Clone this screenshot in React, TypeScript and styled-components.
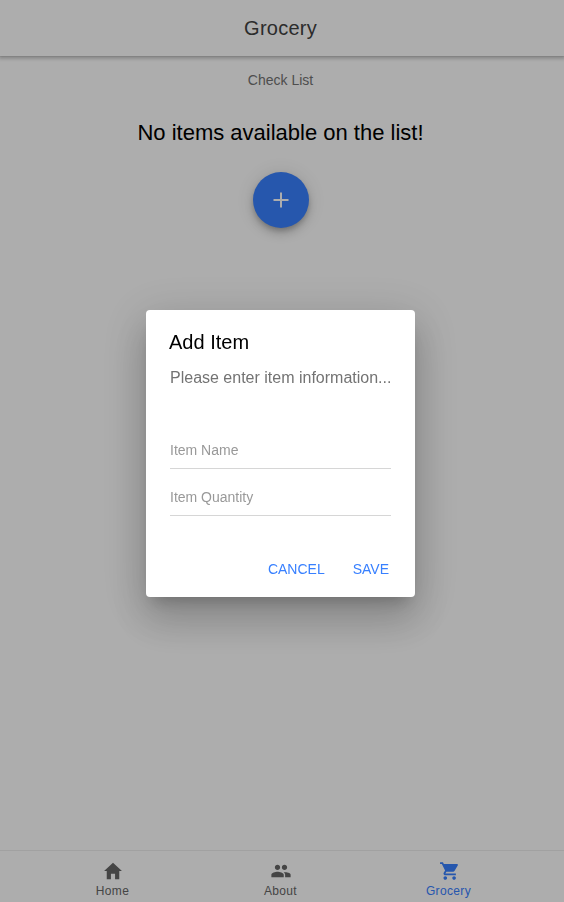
import React from "react";
import styled, { createGlobalStyle } from "styled-components";
import { IoMdAdd, IoMdCart, IoMdHome, IoMdPeople } from "react-icons/io";

const GlobalStyle = createGlobalStyle`
  * { box-sizing: border-box; }
  body {
    margin: 0;
    background: #fff;
    font-family: "Liberation Sans", Arial, sans-serif;
    overflow: hidden;
  }
  button, input { font-family: inherit; }
`;

const Page = styled.div`
  display: flex;
  flex-direction: column;
  height: 100vh;
`;

const Header = styled.header`
  display: flex;
  align-items: center;
  justify-content: center;
  flex: none;
  height: 56px;
  padding-right: 3px;
  background: #fff;
  box-shadow: 0 1px 0 rgba(0, 0, 0, 0.06), 0 2px 3px 1px rgba(0, 0, 0, 0.2);
`;

const Title = styled.h1`
  margin: 0;
  font-size: 20px;
  font-weight: 400;
  letter-spacing: 0.24px;
  color: #424242;
`;

const Content = styled.main`
  display: flex;
  flex: 1;
  flex-direction: column;
  align-items: center;
  padding: 16px 3px 0 0;
`;

const ListHeader = styled.div`
  font-size: 14px;
  line-height: 16px;
  color: #737373;
`;

const EmptyMessage = styled.h2`
  margin: 32px 0 27px;
  font-size: 22px;
  font-weight: 400;
  line-height: 25px;
  color: #000;
`;

const Fab = styled.button`
  display: flex;
  align-items: center;
  justify-content: center;
  width: 56px;
  height: 56px;
  margin-left: 1px;
  padding: 0;
  border: 0;
  border-radius: 50%;
  background: #3880ff;
  color: #fff;
  font-size: 24px;
  box-shadow: 0 3px 5px -1px rgba(0, 0, 0, 0.2), 0 6px 10px 0 rgba(0, 0, 0, 0.14),
    0 1px 18px 0 rgba(0, 0, 0, 0.12);
`;

const TabBar = styled.nav`
  display: flex;
  justify-content: center;
  flex: none;
  height: 52px;
  padding-right: 3px;
  border-top: 1px solid rgba(0, 0, 0, 0.07);
`;

const Tab = styled.button<{ $active?: boolean }>`
  display: flex;
  flex-direction: column;
  align-items: center;
  width: 168px;
  padding: 9px 0 0;
  border: 0;
  background: none;
  color: ${({ $active }) => ($active ? "#3880ff" : "#666")};
  font-size: 22px;
`;

const TabLabel = styled.span`
  margin-top: 2px;
  font-size: 12px;
  line-height: 14px;
  letter-spacing: 0.36px;
`;

const Backdrop = styled.div`
  position: fixed;
  inset: 0;
  display: flex;
  align-items: center;
  justify-content: center;
  padding: 5px 3px 0 0;
  background: rgba(0, 0, 0, 0.32);
`;

const Dialog = styled.section`
  display: flex;
  flex-direction: column;
  width: 269px;
  height: 287px;
  border-radius: 4px;
  background: #fff;
  box-shadow: 0 11px 15px -7px rgba(0, 0, 0, 0.2), 0 24px 38px 3px rgba(0, 0, 0, 0.14),
    0 9px 46px 8px rgba(0, 0, 0, 0.12);
`;

const DialogTitle = styled.h2`
  margin: 0;
  padding: 21px 23px 0;
  font-size: 20px;
  font-weight: 400;
  line-height: 23px;
  color: #000;
`;

const DialogMessage = styled.p`
  margin: 0;
  padding: 15px 0 0 24px;
  font-size: 16px;
  line-height: 18px;
  white-space: nowrap;
  color: #737373;
`;

const Fields = styled.div`
  display: flex;
  flex-direction: column;
  gap: 10px;
  padding: 45px 24px 0;
`;

const Field = styled.input`
  width: 100%;
  height: 37px;
  padding: 0;
  border: 0;
  border-bottom: 1px solid #d6d6d6;
  outline: 0;
  font-size: 14px;
  background: transparent;
  &::placeholder { color: #999; opacity: 1; }
`;

const Actions = styled.div`
  display: flex;
  justify-content: flex-end;
  gap: 8px;
  margin-top: auto;
  padding: 0 16px 10px 0;
`;

const ActionButton = styled.button`
  height: 36px;
  padding: 0 10px;
  border: 0;
  background: none;
  color: #3880ff;
  font-size: 14px;
  text-transform: uppercase;
`;

const tabs = [
  { label: "Home", Icon: IoMdHome },
  { label: "About", Icon: IoMdPeople },
  { label: "Grocery", Icon: IoMdCart, active: true },
];

export default function App() {
  return (
    <>
      <GlobalStyle />
      <Page>
        <Header>
          <Title>Grocery</Title>
        </Header>
        <Content>
          <ListHeader>Check List</ListHeader>
          <EmptyMessage>No items available on the list!</EmptyMessage>
          <Fab aria-label="Add item">
            <IoMdAdd />
          </Fab>
        </Content>
        <TabBar>
          {tabs.map(({ label, Icon, active }) => (
            <Tab key={label} $active={active}>
              <Icon />
              <TabLabel>{label}</TabLabel>
            </Tab>
          ))}
        </TabBar>
      </Page>
      <Backdrop>
        <Dialog role="dialog" aria-modal="true">
          <DialogTitle>Add Item</DialogTitle>
          <DialogMessage>Please enter item information...</DialogMessage>
          <Fields>
            <Field placeholder="Item Name" />
            <Field placeholder="Item Quantity" />
          </Fields>
          <Actions>
            <ActionButton>Cancel</ActionButton>
            <ActionButton>Save</ActionButton>
          </Actions>
        </Dialog>
      </Backdrop>
    </>
  );
}
